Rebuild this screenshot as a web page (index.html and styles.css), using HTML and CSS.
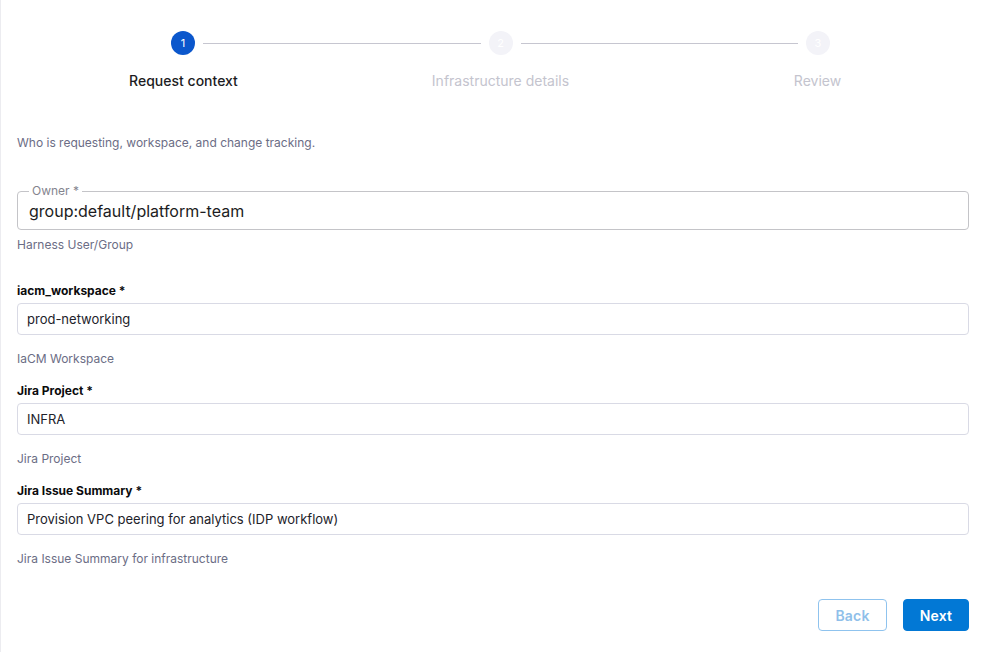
FILE: index.html
```html
<!DOCTYPE html>
<html lang="en">
<head>
<meta charset="utf-8">
<title>Request context</title>
<link rel="stylesheet" href="styles.css">
</head>
<body>
<div class="page">
  <div class="stepper">
    <div class="stepper-track">
      <span class="step-dot active">1</span>
      <span class="step-line"></span>
      <span class="step-dot">2</span>
      <span class="step-line"></span>
      <span class="step-dot">3</span>
    </div>
    <div class="stepper-labels">
      <span class="step-label active">Request context</span>
      <span class="step-label">Infrastructure details</span>
      <span class="step-label">Review</span>
    </div>
  </div>

  <p class="intro">Who is requesting, workspace, and change tracking.</p>

  <fieldset class="outlined">
    <legend class="outlined-label">Owner *</legend>
    <div class="outlined-value">group:default/platform-team</div>
  </fieldset>
  <div class="helper helper-first">Harness User/Group</div>

  <div class="field">
    <div class="field-label">iacm_workspace *</div>
    <div class="field-input">prod-networking</div>
    <div class="helper">IaCM Workspace</div>
  </div>

  <div class="field">
    <div class="field-label">Jira Project *</div>
    <div class="field-input">INFRA</div>
    <div class="helper">Jira Project</div>
  </div>

  <div class="field">
    <div class="field-label">Jira Issue Summary *</div>
    <div class="field-input">Provision VPC peering for analytics (IDP workflow)</div>
    <div class="helper">Jira Issue Summary for infrastructure</div>
  </div>

  <div class="actions">
    <button class="btn btn-back" type="button">Back</button>
    <button class="btn btn-next" type="button">Next</button>
  </div>
</div>
</body>
</html>
```
FILE: styles.css
```css
html, body {
  margin: 0;
  padding: 0;
  background: #ffffff;
}
body {
  font-family: Inter, "Noto Sans", "Liberation Sans", sans-serif;
  color: #22222a;
}
.page {
  box-sizing: border-box;
  width: 986px;
  height: 652px;
  border-left: 1px solid #ececf0;
  padding: 31px 17px 0 16px;
}

/* stepper */
.stepper {
  margin-left: 8px;
  width: 951px;
}
.stepper-track {
  display: flex;
  align-items: center;
  padding: 0 146px 0 146px;
}
.step-dot {
  flex: none;
  width: 24px;
  height: 24px;
  border-radius: 50%;
  background: #f3f3f8;
  color: #ffffff;
  font-size: 11px;
  line-height: 24px;
  text-align: center;
}
.step-dot.active {
  background: #0b57cc;
}
.step-line {
  flex: 1;
  height: 1px;
  background: #c6c6d0;
  margin: 0 8px;
}
.stepper-labels {
  display: grid;
  grid-template-columns: repeat(3, 1fr);
  margin-top: 16px;
}
.step-label {
  text-align: center;
  font-size: 14px;
  line-height: 20px;
  color: #c4c4ce;
}
.step-label.active {
  color: #1c1c22;
  font-weight: 500;
}

.intro {
  margin: 44px 0 0 0;
  font-size: 12px;
  line-height: 16px;
  color: #6b6d85;
}

/* outlined field */
.outlined {
  margin: 32px 0 0 0;
  padding: 0 11px;
  border: 1px solid #c4c4c8;
  border-radius: 4px;
  min-width: 0;
}
.outlined-label {
  padding: 0 3px;
  font-size: 12px;
  line-height: 16px;
  color: #84848e;
}
.outlined-value {
  font-size: 16px;
  line-height: 20px;
  color: #1c1c22;
  padding: 2px 0 8px 0;
}

.helper {
  font-size: 12px;
  line-height: 16px;
  color: #6b6d85;
  margin-top: 16px;
}
.helper.helper-first {
  margin-top: 7px;
}

.field {
  margin-top: 16px;
}
.helper-first + .field {
  margin-top: 30px;
}
.field-label {
  font-size: 12px;
  line-height: 16px;
  font-weight: 700;
  color: #0b0b0d;
}
.field-input {
  box-sizing: border-box;
  margin-top: 4px;
  height: 32px;
  border: 1px solid #d9dae5;
  border-radius: 4px;
  padding: 0 9px;
  font-size: 13px;
  line-height: 30px;
  color: #22222a;
}

.actions {
  display: flex;
  justify-content: flex-end;
  gap: 16px;
  margin-top: 32px;
}
.btn {
  box-sizing: border-box;
  height: 32px;
  border-radius: 4px;
  font-family: Inter, "Noto Sans", "Liberation Sans", sans-serif;
  font-size: 14px;
  font-weight: 600;
  letter-spacing: 0.2px;
  cursor: pointer;
}
.btn-back {
  width: 69px;
  background: #ffffff;
  border: 1px solid #8fc3ee;
  color: #8fbfea;
}
.btn-next {
  width: 66px;
  background: #0278d5;
  border: 1px solid #0278d5;
  color: #ffffff;
}
```
